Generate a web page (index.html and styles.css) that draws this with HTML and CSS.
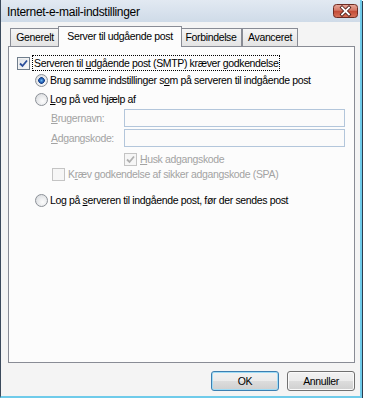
FILE: index.html
```html
<!DOCTYPE html>
<html lang="da">
<head>
    <meta charset="UTF-8">
    <title>Internet-e-mail-indstillinger</title>
    <link rel="stylesheet" href="styles.css">
</head>
<body>
    <div class="window">
        <div class="titlebar">
            <span class="title">Internet-e-mail-indstillinger</span>
            <span class="close">
                <svg width="25" height="14" viewBox="0 0 25 14">
                    <defs>
                        <linearGradient id="red" x1="0" y1="0" x2="0" y2="1">
                            <stop offset="0" stop-color="#e8a99c"/>
                            <stop offset="0.45" stop-color="#d47766"/>
                            <stop offset="0.5" stop-color="#c24a35"/>
                            <stop offset="1" stop-color="#d8745c"/>
                        </linearGradient>
                    </defs>
                    <rect x="0.5" y="0.5" width="24" height="13" rx="3" fill="url(#red)" stroke="#6e2b22"/>
                    <path d="M9 3.5 L16 10.5 M16 3.5 L9 10.5" stroke="#4a1a14" stroke-width="3.4" stroke-linecap="square"/>
                    <path d="M9 3.5 L16 10.5 M16 3.5 L9 10.5" stroke="#fff" stroke-width="1.8" stroke-linecap="square"/>
                </svg>
            </span>
        </div>

        <div class="client">
            <div class="tabs">
                <div class="tab tab-general">Generelt</div>
                <div class="tab tab-outgoing active">Server til udgående post</div>
                <div class="tab tab-connection">Forbindelse</div>
                <div class="tab tab-advanced">Avanceret</div>
            </div>

            <div class="panel">
                <div class="row r-auth">
                    <span class="check">
                        <svg width="11" height="11" viewBox="0 0 11 11"><path d="M2 5.5 L4.5 8 L9 2.5" fill="none" stroke="#2b4e9a" stroke-width="1.8"/></svg>
                    </span>
                    <span class="label focus">Serveren til <u>u</u>dgående post (SMTP) kræver godkendelse</span>
                </div>

                <div class="row r-same">
                    <span class="radio on"></span>
                    <span class="label">Brug samme indstillinger s<u>o</u>m på serveren til indgående post</span>
                </div>

                <div class="row r-logon">
                    <span class="radio"></span>
                    <span class="label"><u>L</u>og på ved hjælp af</span>
                </div>

                <div class="field f-user">
                    <span class="field-label"><u>B</u>rugernavn:</span>
                    <span class="input"></span>
                </div>

                <div class="field f-pass">
                    <span class="field-label"><u>A</u>dgangskode:</span>
                    <span class="input"></span>
                </div>

                <div class="row small r-remember">
                    <span class="check disabled">
                        <svg width="11" height="11" viewBox="0 0 11 11"><path d="M2 5.5 L4.5 8 L9 2.5" fill="none" stroke="#b0b0b0" stroke-width="1.8"/></svg>
                    </span>
                    <span class="label grey"><u>H</u>usk adgangskode</span>
                </div>

                <div class="row small r-spa">
                    <span class="check disabled"></span>
                    <span class="label grey">K<u>r</u>æv godkendelse af sikker adgangskode (SPA)</span>
                </div>

                <div class="row r-before">
                    <span class="radio"></span>
                    <span class="label">Log på <u>s</u>erveren til indgående post, før der sendes post</span>
                </div>
            </div>

            <div class="buttons">
                <button class="btn default">OK</button>
                <button class="btn">Annuller</button>
            </div>
        </div>
    </div>
</body>
</html>
```

FILE: styles.css
```css
* {
    box-sizing: border-box;
}

html, body {
    margin: 0;
    padding: 0;
    background: #fff;
}

body {
    font-family: "Liberation Sans", Arial, sans-serif;
    font-size: 10.5px;
    letter-spacing: -0.35px;
    color: #000;
}

.window {
    width: 362px;
    height: 398px;
    display: flex;
    flex-direction: column;
    background: #f4f4f4;
    border-left: 1px solid #3b4a5c;
    border-right: 2px solid #6fcbea;
    border-bottom: 2px solid #6fcbea;
    box-shadow: 1px 1px 0 #2c3c4e;
}

/* title bar */
.titlebar {
    height: 22px;
    flex: none;
    display: flex;
    align-items: center;
    padding-left: 6px;
    background: linear-gradient(#e2e9f2, #cfdbe8);
}

.title {
    font-size: 12px;
    letter-spacing: -0.3px;
    padding-top: 2px;
}

.close {
    margin-left: auto;
    margin-right: 2px;
    align-self: flex-start;
    margin-top: 4px;
    height: 14px;
    display: flex;
}

/* dialog client area */
.client {
    flex: 1;
    padding: 4px 5px 0 7px;
}

.tabs {
    display: flex;
    align-items: flex-end;
    padding-left: 2px;
}

.tab {
    height: 18px;
    border: 1px solid #898c95;
    border-bottom: none;
    background: linear-gradient(#f5f5f5, #e4e4e4);
    text-align: center;
    line-height: 16px;
    white-space: nowrap;
}

.tab-general { width: 50px; }
.tab-outgoing { width: 124px; }
.tab-connection { width: 62px; }
.tab-advanced { width: 56px; }

.tab.active {
    height: 21px;
    margin: 0 -2px -1px;
    background: #fcfcfc;
    position: relative;
    z-index: 1;
    line-height: 19px;
}

.panel {
    width: 347px;
    height: 317px;
    border: 1px solid #898c95;
    background: #fcfcfc;
    padding: 8px 8px 0 8px;
}

/* rows */
.row {
    display: flex;
    align-items: center;
    height: 16px;
    white-space: nowrap;
}

.row.small {
    height: 14px;
}

.r-same { margin-top: 1px; padding-left: 18px; }
.r-logon { margin-top: 3px; padding-left: 18px; }
.r-remember { margin-top: 5px; padding-left: 107px; }
.r-spa { margin-top: 1px; padding-left: 35px; }
.r-before { margin-top: 11px; padding-left: 18px; }

.label {
    margin-left: 2px;
}

.label.focus {
    height: 16px;
    line-height: 14px;
    padding: 0 1px;
    border: 1px dotted #000;
}

.grey {
    color: #a3a3a3;
}

.check {
    width: 13px;
    height: 13px;
    flex: none;
    border: 1px solid #6f7d8c;
    background: linear-gradient(135deg, #dbe0e6, #fbfbfb);
    box-shadow: inset 0 0 0 1px #f2f2f2;
    display: flex;
}

.check.disabled {
    border-color: #c4c4c4;
    background: #f6f6f6;
    box-shadow: none;
}

.r-remember .label,
.r-spa .label {
    margin-left: 3px;
}

.radio {
    width: 13px;
    height: 13px;
    flex: none;
    border: 1px solid #8b9097;
    border-radius: 50%;
    background: radial-gradient(circle at 60% 65%, #fdfdfd, #d3d6da);
}

.radio.on {
    background:
        radial-gradient(circle, #6bb8f0 0, #2560b4 2px, #163f86 3px, transparent 3.6px),
        radial-gradient(circle at 60% 65%, #fdfdfd, #d3d6da);
}

/* text fields */
.field {
    display: flex;
    align-items: center;
    height: 18px;
    margin-top: 2px;
    padding-left: 34px;
}

.field-label {
    width: 73px;
    color: #a3a3a3;
}

.input {
    width: 221px;
    height: 18px;
    border: 1px solid #b3c6db;
    background: #fbfbfb;
}

/* buttons */
.buttons {
    display: flex;
    justify-content: flex-end;
    gap: 8px;
    margin-top: 8px;
}

.btn {
    width: 68px;
    height: 20px;
    padding: 0;
    font-family: inherit;
    font-size: 10.5px;
    letter-spacing: -0.35px;
    color: #000;
    border: 1px solid #707070;
    border-radius: 3px;
    background: linear-gradient(#f2f2f2 0, #ebebeb 50%, #dddddd 50%, #cfcfcf 100%);
    box-shadow: inset 0 0 0 1px #fafafa;
}

.btn.default {
    border-color: #3c7fb1;
    box-shadow: inset 0 0 0 1px #9fdcf6;
}
```
